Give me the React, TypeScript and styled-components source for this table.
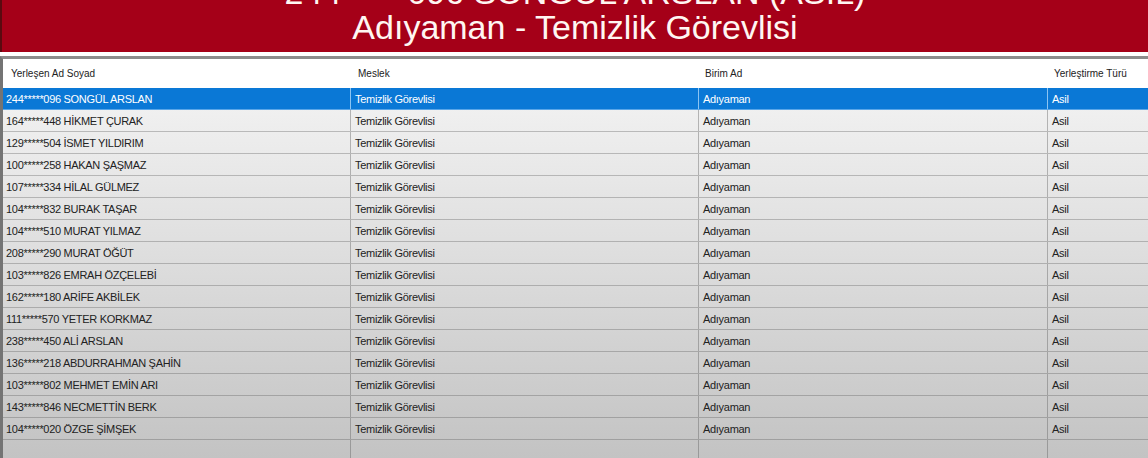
import React from "react";
import styled, { createGlobalStyle } from "styled-components";

const Global = createGlobalStyle`
  html, body { margin: 0; padding: 0; background: #c2c2c2; }
  body { font-family: "Liberation Sans", Arial, sans-serif; }
`;

const Page = styled.div`
  width: 1148px;
  height: 458px;
  overflow: hidden;
  display: flex;
  flex-direction: column;
  background: #ffffff;
`;

const Banner = styled.div`
  height: 52px;
  flex: none;
  background: #a50018;
  border-left: 2px solid #5a0a10;
  overflow: hidden;
  display: flex;
  flex-direction: column;
  align-items: center;
  color: #fff6f2;
  font-family: "Liberation Sans", Arial, sans-serif;
  font-size: 34px;
  line-height: 35px;
`;

const BannerLine = styled.div<{ $offset?: number }>`
  margin-top: ${(p) => p.$offset ?? 0}px;
  white-space: nowrap;
`;

const Gap = styled.div`
  height: 4px;
  flex: none;
  background: #ffffff;
`;

const Grid = styled.div`
  flex: 1;
  display: flex;
  flex-direction: column;
  border-top: 3px solid #8c8c8c;
  border-left: 3px solid #747474;
  background: linear-gradient(#f6f6f6 0%, #e0e0e0 45%, #c3c3c3 100%);
  min-height: 0;
`;

const cols = "347px 348px 349px 1fr";

const HeaderRow = styled.div`
  height: 29px;
  flex: none;
  display: grid;
  grid-template-columns: ${cols};
  background: #ffffff;
  align-items: center;
  font-size: 10px;
  color: #222;
`;

const HeaderCell = styled.div<{ $pad: number }>`
  padding-left: ${(p) => p.$pad}px;
  white-space: nowrap;
`;

const Row = styled.div<{ $selected?: boolean }>`
  height: 21px;
  flex: none;
  display: grid;
  grid-template-columns: ${cols};
  border-bottom: 1px solid ${(p) => (p.$selected ? "#5aa6e8" : "rgba(90,90,90,0.35)")};
  background: ${(p) => (p.$selected ? "#0a78d6" : "transparent")};
  color: ${(p) => (p.$selected ? "#ffffff" : "#222222")};
  font-size: 11px;
  letter-spacing: -0.3px;
`;

const Cell = styled.div<{ $first?: boolean; $selected?: boolean }>`
  display: flex;
  align-items: center;
  padding-left: ${(p) => (p.$first ? 3 : 4)}px;
  white-space: nowrap;
  overflow: hidden;
  border-left: ${(p) =>
    p.$first ? "none" : `1px solid ${p.$selected ? "#8cc4f2" : "rgba(90,90,90,0.4)"}`};
`;

const Filler = styled.div`
  flex: 1;
  display: grid;
  grid-template-columns: ${cols};
`;

const FillerCell = styled.div<{ $first?: boolean }>`
  border-left: ${(p) => (p.$first ? "none" : "1px solid rgba(90,90,90,0.4)")};
`;

const people = [
  "244*****096 SONGÜL ARSLAN",
  "164*****448 HİKMET ÇURAK",
  "129*****504 İSMET YILDIRIM",
  "100*****258 HAKAN ŞAŞMAZ",
  "107*****334 HİLAL GÜLMEZ",
  "104*****832 BURAK TAŞAR",
  "104*****510 MURAT YILMAZ",
  "208*****290 MURAT ÖĞÜT",
  "103*****826 EMRAH ÖZÇELEBİ",
  "162*****180 ARİFE AKBİLEK",
  "111*****570 YETER KORKMAZ",
  "238*****450 ALİ ARSLAN",
  "136*****218 ABDURRAHMAN ŞAHİN",
  "103*****802 MEHMET EMİN ARI",
  "143*****846 NECMETTİN BERK",
  "104*****020 ÖZGE ŞİMŞEK",
];

export default function App() {
  return (
    <>
      <Global />
      <Page>
        <Banner>
          <BannerLine $offset={-25}>244*****096 SONGÜL ARSLAN (ASIL)</BannerLine>
          <BannerLine>Adıyaman - Temizlik Görevlisi</BannerLine>
        </Banner>
        <Gap />
        <Grid>
          <HeaderRow>
            <HeaderCell $pad={8}>Yerleşen Ad Soyad</HeaderCell>
            <HeaderCell $pad={8}>Meslek</HeaderCell>
            <HeaderCell $pad={7}>Birim Ad</HeaderCell>
            <HeaderCell $pad={7}>Yerleştirme Türü</HeaderCell>
          </HeaderRow>
          {people.map((name, i) => {
            const sel = i === 0;
            return (
              <Row key={name} $selected={sel}>
                <Cell $first $selected={sel}>{name}</Cell>
                <Cell $selected={sel}>Temizlik Görevlisi</Cell>
                <Cell $selected={sel}>Adıyaman</Cell>
                <Cell $selected={sel}>Asil</Cell>
              </Row>
            );
          })}
          <Filler>
            <FillerCell $first />
            <FillerCell />
            <FillerCell />
            <FillerCell />
          </Filler>
        </Grid>
      </Page>
    </>
  );
}
